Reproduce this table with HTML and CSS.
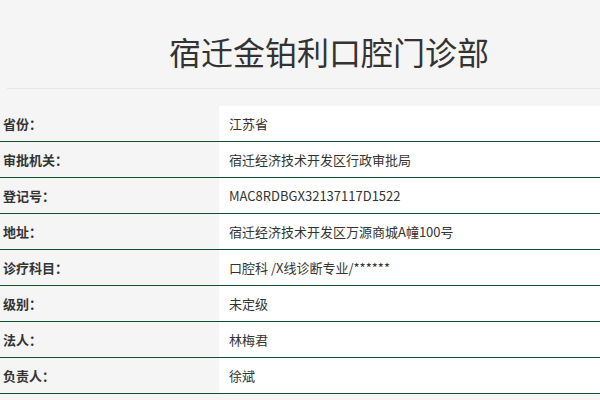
FILE: index.html
```html
<!DOCTYPE html>
<html lang="zh">
<head>
<meta charset="utf-8">
<link rel="stylesheet" href="styles.css">
</head>
<body>
<header class="head">
  <h1 class="title">宿迁金铂利口腔门诊部</h1>
</header>
<div class="rule"></div>
<div class="info">
  <div class="row"><div class="k">省份：</div><div class="v">江苏省</div></div>
  <div class="row"><div class="k">审批机关：</div><div class="v">宿迁经济技术开发区行政审批局</div></div>
  <div class="row"><div class="k">登记号：</div><div class="v">MAC8RDBGX32137117D1522</div></div>
  <div class="row"><div class="k">地址：</div><div class="v">宿迁经济技术开发区万源商城A幢100号</div></div>
  <div class="row"><div class="k">诊疗科目：</div><div class="v">口腔科 /X线诊断专业/******</div></div>
  <div class="row"><div class="k">级别：</div><div class="v">未定级</div></div>
  <div class="row"><div class="k">法人：</div><div class="v">林梅君</div></div>
  <div class="row"><div class="k">负责人：</div><div class="v">徐斌</div></div>
</div>
</body>
</html>
```
FILE: styles.css
```css
html, body {
  margin: 0;
  padding: 0;
  background: #f5f5f5;
  font-family: "Noto Sans CJK SC", "Noto Sans", sans-serif;
  color: #333;
}
.head {
  height: 88px;
  display: flex;
  align-items: center;
  padding-left: 169px;
  padding-top: 14px;
  box-sizing: border-box;
}
.title {
  margin: 0;
  font-size: 32px;
  font-weight: 400;
  color: #333;
  line-height: 1;
}
.rule {
  margin-left: 7px;
  border-top: 1px solid #e6e6e6;
}
.info {
  margin-top: 17px;
}
.row {
  display: grid;
  grid-template-columns: 219px 1fr;
  height: 36px;
  box-sizing: border-box;
  border-bottom: 1px solid #0e5230;
}
.k {
  display: flex;
  align-items: center;
  padding-left: 3px;
  font-size: 13px;
  font-weight: 700;
  color: #333;
}
.v {
  display: flex;
  align-items: center;
  padding-left: 10px;
  background: #fff;
  font-size: 13px;
  color: #333;
}
```
